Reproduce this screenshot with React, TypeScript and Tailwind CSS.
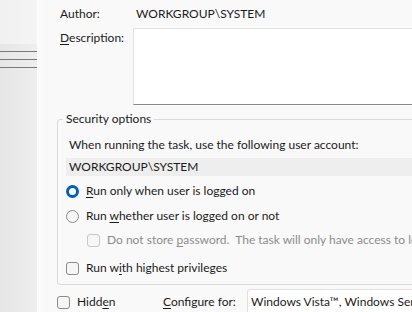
import { ReactNode } from "react";

const font = { fontFamily: 'Lato, "Noto Sans", sans-serif' };

function Radio({ checked }: { checked?: boolean }) {
  if (checked) {
    return (
      <span className="flex size-[13px] shrink-0 items-center justify-center rounded-full bg-[#005fb8]">
        <span className="size-[7px] rounded-full bg-white" />
      </span>
    );
  }
  return <span className="size-[13px] shrink-0 rounded-full border border-[#8a8a8a] bg-[#f6f6f6]" />;
}

function Check({ disabled }: { disabled?: boolean }) {
  return (
    <span
      className={
        disabled
          ? "size-[13px] shrink-0 rounded-[3px] border border-[#c8c8c8] bg-[#f6f6f6]"
          : "size-[13px] shrink-0 rounded-[3px] border border-[#8a8a8a] bg-[#f6f6f6]"
      }
    />
  );
}

function Option({ control, children, className = "" }: { control: ReactNode; children: ReactNode; className?: string }) {
  return (
    <div className={`flex h-4 shrink-0 items-center gap-[7px] whitespace-pre ${className}`}>
      {control}
      <span>{children}</span>
    </div>
  );
}

export default function App() {
  return (
    <div className="flex h-[312px] w-[412px] overflow-hidden bg-[#f9f9f9] text-[12px] leading-4 text-[#1b1b1b]" style={font}>
      {/* window behind */}
      <div className="flex w-[37px] shrink-0 flex-col bg-gradient-to-r from-[#e6e6e6] to-[#eeeeee]">
        <div className="h-[44px] bg-gradient-to-r from-[#f1f1f1] to-[#f4f4f4]" />
        <div className="mt-[7px] h-px bg-[#7a7a7a]" />
        <div className="mt-[7px] h-px bg-[#7a7a7a]" />
        <div className="mt-[7px] h-px bg-[#7a7a7a]" />
      </div>
      <div className="w-[11px] shrink-0 bg-gradient-to-r from-[#fdfdfd] to-[#f6f6f6]" />

      <div className="flex min-w-0 flex-1 flex-col">
        <div className="mt-[6px] ml-[12px] grid grid-cols-[73px_1fr] items-start">
          <span>Author:</span>
          <span className="pl-[3px]">WORKGROUP\SYSTEM</span>
          <span className="mt-[6px] pt-[2px]">
            <u className="underline-offset-2">D</u>escription:
          </span>
          <div className="mt-[6px] h-[77px] w-[300px] border border-b-[#8a8a8a] border-[#e2e2e2] bg-white" />
        </div>

        <fieldset className="mt-[6px] ml-[9px] w-[400px] shrink-0 rounded-[3px] border border-[#dadada] pr-2 pb-[8px] pl-2 pt-[10px]">
          <legend className="-ml-[3px] px-[3px]">Security options</legend>
          <div className="ml-[3px]">When running the task, use the following user account:</div>
          <div className="mt-[5px] h-[18px] bg-[#eeeeee] pl-[3px] leading-[18px]">WORKGROUP\SYSTEM</div>
          <Option className="mt-[7px]" control={<Radio checked />}>
            <u className="underline-offset-2">R</u>un only when user is logged on
          </Option>
          <Option className="mt-[9px]" control={<Radio />}>
            Run <u className="underline-offset-2">w</u>hether user is logged on or not
          </Option>
          <Option className="mt-[8px] ml-[21px] text-[#8c8c8c]" control={<Check disabled />}>
            Do not store <u className="underline-offset-2">p</u>assword.  The task will only have access to local computer resources.
          </Option>
          <Option className="mt-[12px]" control={<Check />}>
            Run w<u className="underline-offset-2">i</u>th highest privileges
          </Option>
        </fieldset>

        <div className="mt-[4px] ml-[9px] flex items-start">
          <Option className="mt-[5px] w-[106px]" control={<Check />}>
            Hidd<u className="underline-offset-2">e</u>n
          </Option>
          <span className="mt-[5px] w-[84px] shrink-0 whitespace-nowrap">
            <u className="underline-offset-2">C</u>onfigure for:
          </span>
          <div className="h-[26px] w-[200px] shrink-0 whitespace-nowrap rounded-[3px] border border-[#e0e0e0] bg-white pl-[3px] pt-[4px]">
            Windows Vista™, Windows Server™ 2008
          </div>
        </div>
      </div>
    </div>
  );
}
